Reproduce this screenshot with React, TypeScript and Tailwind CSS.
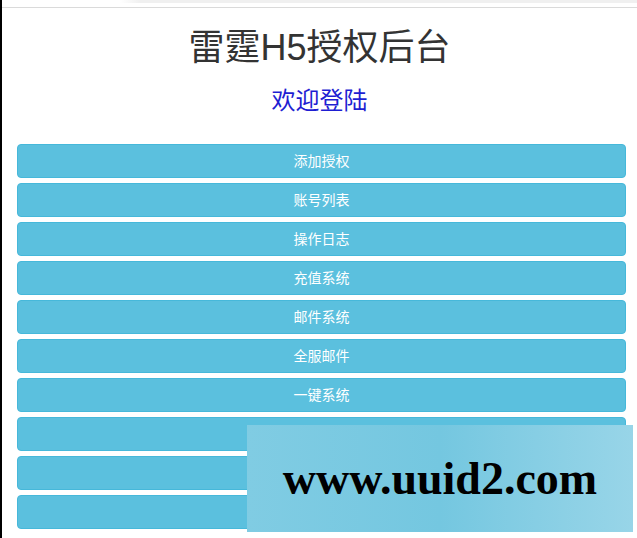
import React from 'react'

const menus = [
  '添加授权',
  '账号列表',
  '操作日志',
  '充值系统',
  '邮件系统',
  '全服邮件',
  '一键系统',
  '',
  '',
  '',
]

export default function App() {
  return (
    <div
      className="flex min-h-[538px] bg-white"
      style={{ fontFamily: '"Liberation Sans", "Noto Sans CJK SC", sans-serif' }}
    >
      <div className="w-[2px] shrink-0 bg-black" />
      <div className="relative flex-1">
        {/* browser chrome edge */}
        <div className="h-[8px] border-b border-[#dadada]">
          <div className="ml-[118px] h-[3px] bg-gradient-to-r from-white to-[#f0f0f0] to-[20px]" />
        </div>

        <h1 className="mt-[20px] text-center text-[36px] leading-[40px] text-[#333]">雷霆H5授权后台</h1>
        <h2 className="mt-[20px] text-center text-[24px] leading-[26px] text-[#1e1ed2]">欢迎登陆</h2>

        <div className="mt-[30px] flex flex-col gap-[5px] pl-[15px] pr-[11px]">
          {menus.map((m, i) => (
            <button
              key={i}
              className="h-[34px] rounded-[4px] border border-[#46b8da] bg-[#5bc0de] text-[14px] text-white"
            >
              {m}
            </button>
          ))}
        </div>

        {/* watermark */}
        <div className="absolute left-[245px] top-[425px] flex h-[107px] w-[386px] items-center justify-center bg-gradient-to-r from-[#80cce3] via-[#74c7e0] to-[#98d5e8]">
          <span
            className="text-[46px] font-bold leading-none text-black"
            style={{ fontFamily: '"Liberation Serif", serif' }}
          >
            www.uuid2.com
          </span>
        </div>
      </div>
    </div>
  )
}
